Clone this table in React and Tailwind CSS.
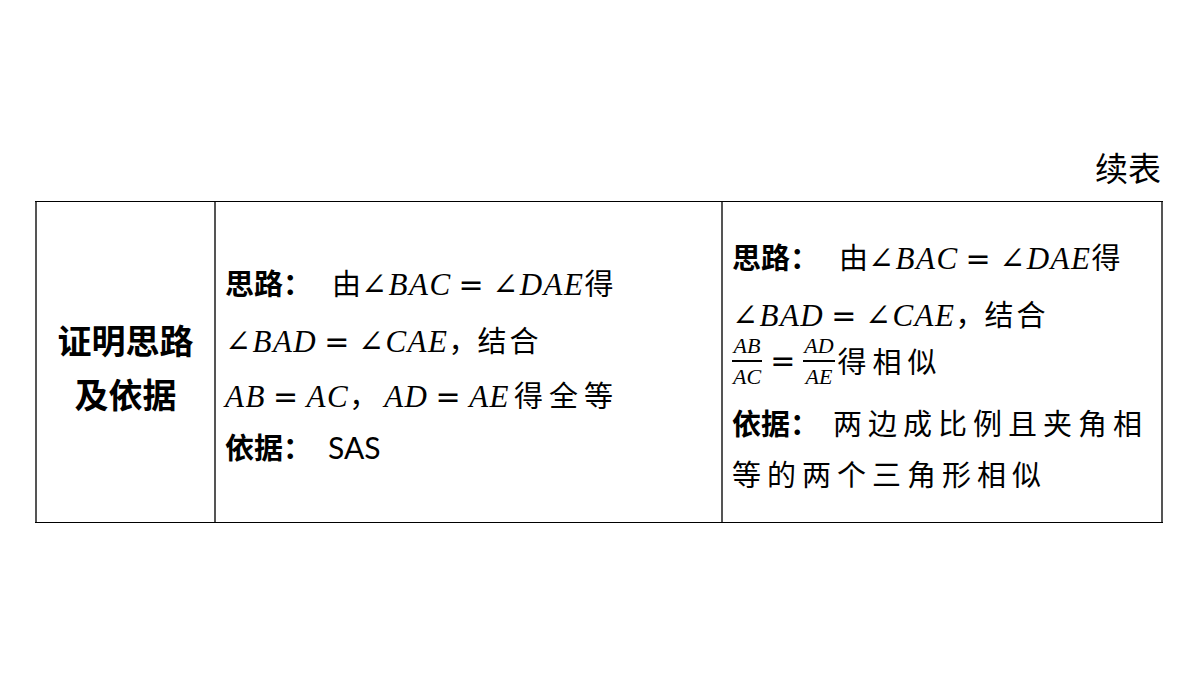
import React from "react";

const cjk = { fontFamily: '"Noto Sans CJK SC", sans-serif' };
const math = { fontFamily: '"Liberation Serif", "DejaVu Serif", serif' };
const opFont = { fontFamily: '"DejaVu Sans", sans-serif' };

function M({ children }) {
  return (
    <span className="italic" style={math}>
      {children}
    </span>
  );
}

function Op({ children }) {
  return (
    <span className="mx-[7px] not-italic text-[30px]" style={opFont}>
      {children}
    </span>
  );
}

function Mx({ children }) {
  return (
    <span className="text-[31px] tracking-[1.5px]" style={math}>
      {children}
    </span>
  );
}

function Frac({ top, bottom }) {
  return (
    <span className="inline-flex flex-col items-center text-[22px] leading-[25px] italic" style={math}>
      <span className="px-[1px]">{top}</span>
      <span className="block w-full h-[2px] bg-black my-[2px]"></span>
      <span className="px-[1px]">{bottom}</span>
    </span>
  );
}

export default function App() {
  return (
    <div className="w-[1200px] h-[675px] bg-white text-black relative" style={cjk}>
      <div className="pt-[146px]">
        <div className="flex justify-end pr-[39px] text-[33px] leading-[42px]">续表</div>
        <div className="ml-[35px] mt-[13px] w-[1128px] h-[322px] grid grid-cols-[181px_507px_440px] border-t border-b border-black">
          <div className="border-l-2 border-r-2 border-[#555] flex flex-col items-center justify-center pt-[10px] font-bold text-[34px] leading-[54px]">
            <div>证明思路</div>
            <div>及依据</div>
          </div>
          <div className="border-r-2 border-[#555] flex flex-col justify-center pl-[9px] pt-[2px] text-[29px]">
            <div className="whitespace-nowrap h-[57px] leading-[57px]">
              <span className="font-bold">思路：</span>
              <span className="ml-[20px]">由</span>
              <Mx>∠<M>BAC</M><Op>=</Op>∠<M>DAE</M></Mx>得
            </div>
            <div className="whitespace-nowrap h-[57px] leading-[57px]">
              <Mx>∠<M>BAD</M><Op>=</Op>∠<M>CAE</M></Mx>，<span className="tracking-[3px]">结合</span>
            </div>
            <div className="whitespace-nowrap h-[53px] leading-[53px]">
              <Mx><M>AB</M><Op>=</Op><M>AC</M></Mx>
              <span className="mr-[6px]">，</span>
              <Mx><M>AD</M><Op>=</Op><M>AE</M></Mx>
              <span className="ml-[4px] tracking-[6px]">得全等</span>
            </div>
            <div className="whitespace-nowrap h-[51px] leading-[51px]">
              <span className="font-bold">依据：</span>
              <span style={{ fontFamily: 'Lato, "Liberation Sans", sans-serif' }} className="ml-[16px] text-[30px]">
                SAS
              </span>
            </div>
          </div>
          <div className="border-r-2 border-[#555] flex flex-col justify-center pl-[9px] pt-[4px] text-[29px]">
            <div className="whitespace-nowrap h-[50px] leading-[50px]">
              <span className="font-bold">思路：</span>
              <span className="ml-[20px]">由</span>
              <Mx>∠<M>BAC</M><Op>=</Op>∠<M>DAE</M></Mx>得
            </div>
            <div className="whitespace-nowrap mt-[12px] h-[40px] leading-[40px]">
              <Mx>∠<M>BAD</M><Op>=</Op>∠<M>CAE</M></Mx>，<span className="tracking-[3px]">结合</span>
            </div>
            <div className="whitespace-nowrap h-[56px] flex items-center">
              <Frac top="AB" bottom="AC" />
              <span className="mx-[8px] text-[30px] leading-[40px]" style={opFont}>=</span>
              <Frac top="AD" bottom="AE" />
              <span className="ml-[3px] tracking-[6px]">得相似</span>
            </div>
            <div className="whitespace-nowrap mt-[8px] h-[50px] leading-[50px] tracking-[6px]">
              <span className="font-bold tracking-normal">依据：</span>
              <span className="ml-[14px]">两边成比例且夹角相</span>
            </div>
            <div className="whitespace-nowrap mt-[1px] h-[50px] leading-[50px] tracking-[6px]">等的两个三角形相似</div>
          </div>
        </div>
      </div>
    </div>
  );
}
